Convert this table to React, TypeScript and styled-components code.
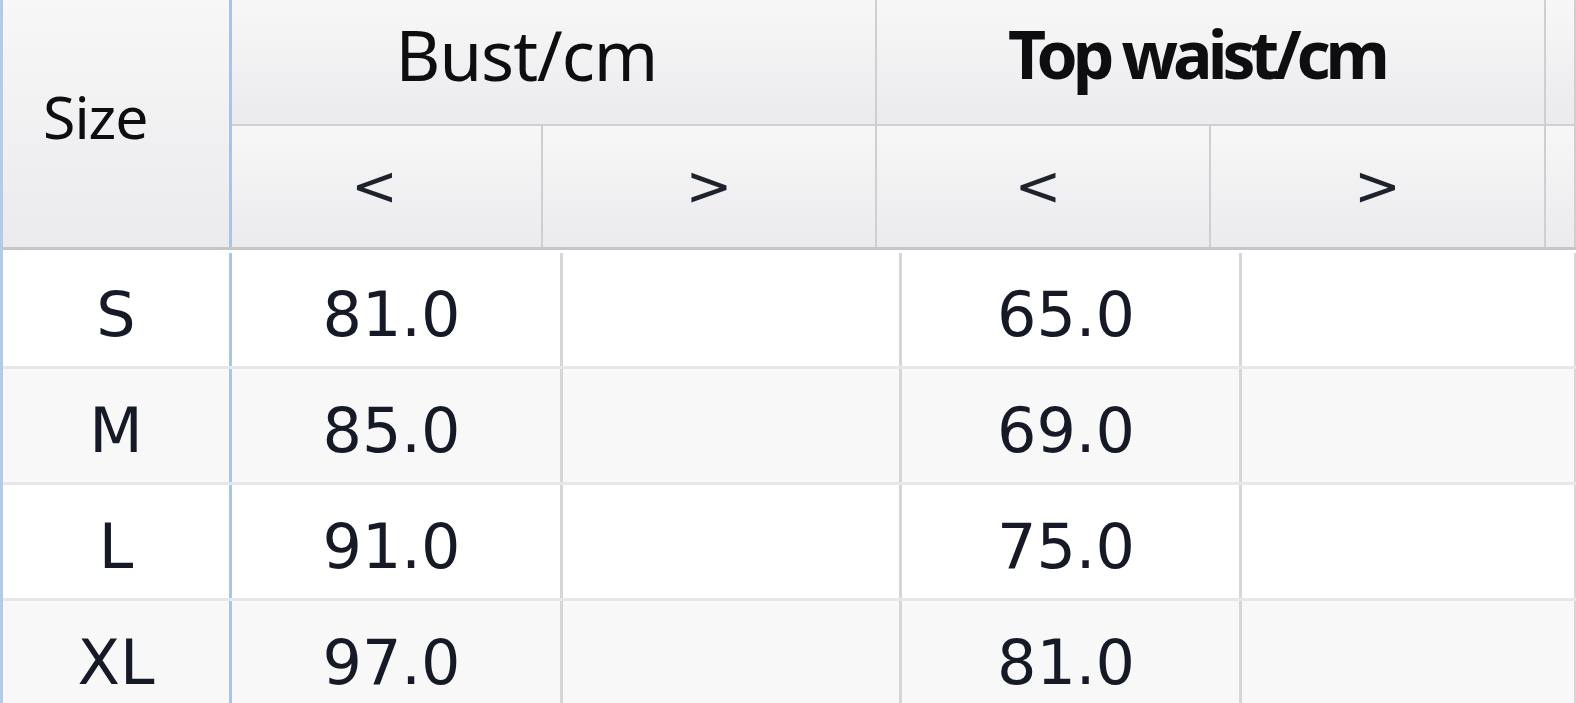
import React from "react";
import styled, { createGlobalStyle } from "styled-components";

const GlobalStyle = createGlobalStyle`
  html, body {
    margin: 0;
    padding: 0;
    background: #ffffff;
    overflow: hidden;
  }
  * { box-sizing: border-box; }
`;

const Sheet = styled.div`
  width: 1576px;
  height: 703px;
  overflow: hidden;
  background: #ffffff;
  border-left: 3px solid #b3cbe8;
  display: flex;
  flex-direction: column;
`;

const HeaderGrid = styled.div`
  display: grid;
  grid-template-columns: 229px 311px 334px 334px 335px 1fr;
  grid-template-rows: 126px 121px;
  border-bottom: 3px solid #c6c6c8;
  flex-shrink: 0;
`;

const HeadCell = styled.div`
  display: flex;
  align-items: center;
  justify-content: center;
  background: linear-gradient(#f7f7f8, #ebebed);
  border-right: 2px solid #cfcfd1;
  color: #0e0e10;
  font-family: "Noto Sans", "Open Sans", sans-serif;
  white-space: nowrap;
`;

const SizeHead = styled(HeadCell)`
  grid-column: 1;
  grid-row: 1 / span 2;
  justify-content: flex-start;
  padding-left: 40px;
  padding-bottom: 16px;
  font-size: 59px;
  letter-spacing: -1px;
  border-right: 3px solid #a9c4e6;
`;

const GroupHead = styled(HeadCell)<{ $bold?: boolean; $offset?: number }>`
  grid-column: span ${(p) => (p.$offset === undefined ? 1 : 2)};
  border-bottom: 2px solid #d0d0d2;
  font-size: ${(p) => (p.$bold ? 66 : 69)}px;
  font-weight: ${(p) => (p.$bold ? 700 : 400)};
  letter-spacing: ${(p) => (p.$bold ? "-5px" : "-1px")};
  padding-right: ${(p) => p.$offset ?? 0}px;
  padding-bottom: ${(p) => (p.$bold ? 18 : 17)}px;
`;

const SubHead = styled(HeadCell)<{ $shift?: number }>`
  font-family: "DejaVu Sans", Verdana, sans-serif;
  font-size: 56px;
  color: #1e222c;
  padding-right: ${(p) => p.$shift ?? 0}px;
  padding-bottom: 2px;
`;

const Body = styled.div`
  display: flex;
  flex-direction: column;
  padding-top: 3px;
`;

const BodyRow = styled.div<{ $striped: boolean }>`
  display: grid;
  grid-template-columns: 229px 331px 339px 340px 335px;
  height: 116px;
  flex-shrink: 0;
  background: ${(p) => (p.$striped ? "#f8f8f9" : "#ffffff")};
  border-bottom: 3px solid #e7e7e9;
`;

const BodyCell = styled.div<{ $first?: boolean; $num?: boolean }>`
  display: flex;
  align-items: center;
  justify-content: center;
  border-right: 3px solid ${(p) => (p.$first ? "#abc5e6" : "#d6d6d8")};
  font-family: "DejaVu Sans", Verdana, sans-serif;
  font-size: 62px;
  color: #161a26;
  padding-top: 9px;
  padding-right: ${(p) => (p.$num ? 9 : 0)}px;
  white-space: nowrap;
`;

const rows = [
  { size: "S", bust: "81.0", waist: "65.0" },
  { size: "M", bust: "85.0", waist: "69.0" },
  { size: "L", bust: "91.0", waist: "75.0" },
  { size: "XL", bust: "97.0", waist: "81.0" },
];

export default function App() {
  return (
    <>
      <GlobalStyle />
      <Sheet>
        <HeaderGrid>
          <SizeHead>Size</SizeHead>
          <GroupHead $offset={54}>Bust/cm</GroupHead>
          <GroupHead $bold $offset={28}>Top waist/cm</GroupHead>
          <GroupHead />
          <SubHead $shift={24}>&lt;</SubHead>
          <SubHead>&gt;</SubHead>
          <SubHead $shift={10}>&lt;</SubHead>
          <SubHead>&gt;</SubHead>
          <SubHead />
        </HeaderGrid>
        <Body>
          {rows.map((r, i) => (
            <BodyRow key={r.size} $striped={i % 2 === 1}>
              <BodyCell $first>{r.size}</BodyCell>
              <BodyCell $num>{r.bust}</BodyCell>
              <BodyCell />
              <BodyCell $num>{r.waist}</BodyCell>
              <BodyCell />
            </BodyRow>
          ))}
        </Body>
      </Sheet>
    </>
  );
}
